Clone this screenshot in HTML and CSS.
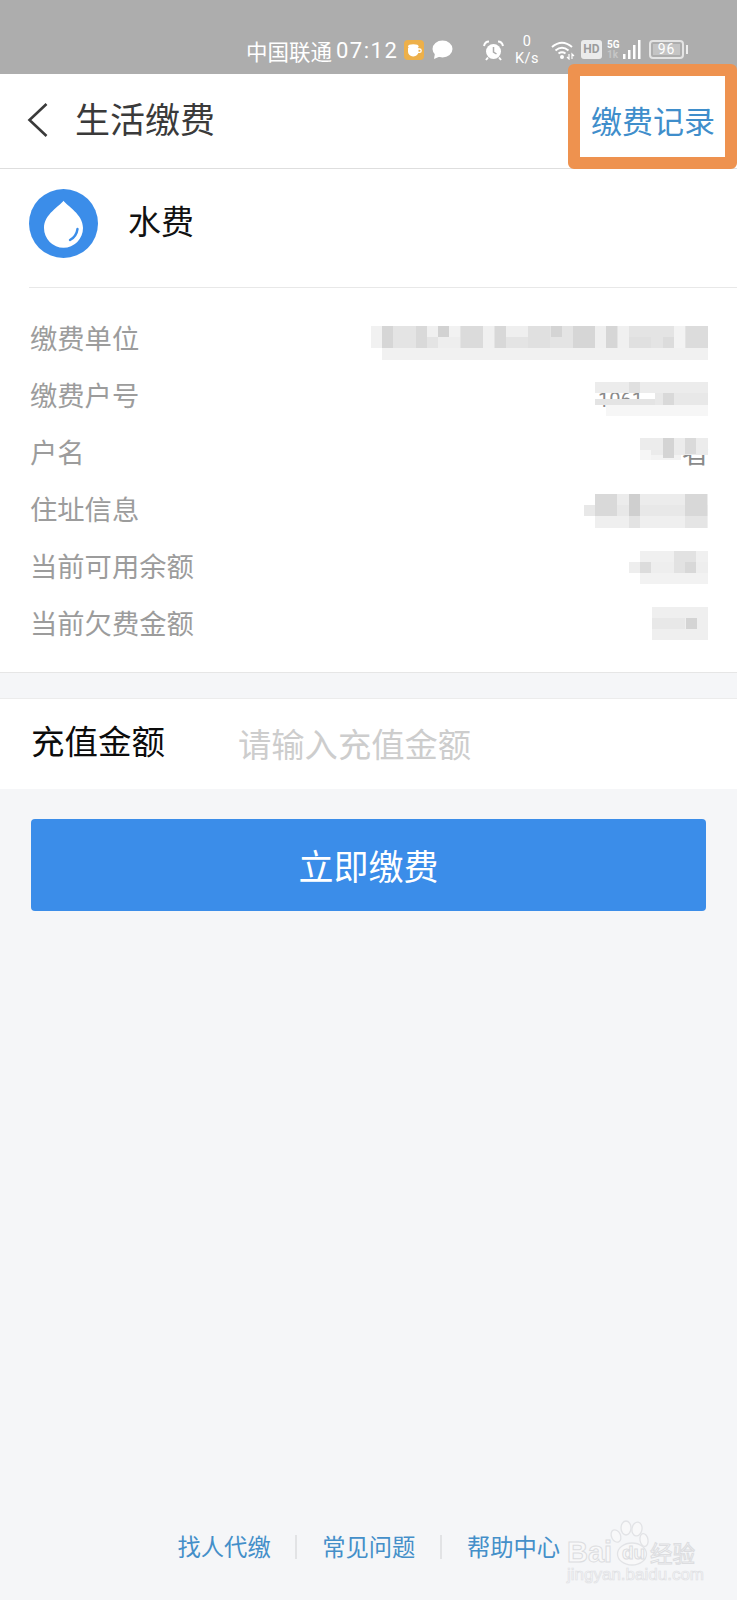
FILE: index.html
```html
<!DOCTYPE html>
<html lang="zh-CN">
<head>
<meta charset="utf-8">
<title>生活缴费</title>
<link rel="stylesheet" href="styles.css">
</head>
<body>
<div class="page">
  <div class="status">
    <span class="carrier">中国联通</span>
    <span class="clock">07:12</span>
    <svg class="ic-app" width="20" height="20" viewBox="0 0 20 20"><rect width="20" height="20" rx="4" fill="#edb04a"/><path d="M4 8h10.500v3.500a5 5 0 0 1-5 5H9a5 5 0 0 1-5-5z" fill="#fff"/><path d="M14 9h1.500a1.700 1.700 0 0 1 0 3.400H14" fill="none" stroke="#fff" stroke-width="1.300"/><ellipse cx="9.300" cy="6.500" rx="5.300" ry="2.300" fill="#fff"/></svg>
    <svg class="ic-msg" width="21" height="20" viewBox="0 0 21 20"><ellipse cx="10.500" cy="9" rx="10" ry="8.500" fill="#fff"/><path d="M3 13 L2 19 L9 16z" fill="#fff"/></svg>
    <svg class="ic-alarm" width="21" height="21" viewBox="0 0 21 21"><circle cx="10.500" cy="11.500" r="7.500" fill="#fff"/><path d="M10.500 7v5l3 2" fill="none" stroke="#adadad" stroke-width="1.500"/><path d="M1 6 Q2 1.500 6 1.500M20 6 Q19 1.500 15 1.500M5 17.500 L3 20M16 17.500 L18 20" fill="none" stroke="#fff" stroke-width="2"/></svg>
    <div class="speed"><span>0</span><span>K/s</span></div>
    <svg class="ic-wifi" width="24" height="20" viewBox="0 0 24 20"><path d="M1 7 Q11 -1.500 21 7M4.500 10.500 Q11 5 17.500 10.500M7.500 13.500 Q11 11 14.500 13.500" fill="none" stroke="#fff" stroke-width="2"/><circle cx="11" cy="17" r="2" fill="#fff"/><path d="M18 14v5l-2-2M21 19v-5l2 2" fill="none" stroke="#fff" stroke-width="1.200"/></svg>
    <span class="hd">HD</span>
    <div class="signal-label"><span>5G</span><span class="dim">1k</span></div>
    <svg class="ic-signal" width="18" height="20" viewBox="0 0 18 20"><rect x="0" y="14" width="2.500" height="5" fill="#fff"/><rect x="5" y="10" width="2.500" height="9" fill="#fff"/><rect x="10" y="5" width="2.500" height="14" fill="#fff"/><rect x="15" y="0" width="2.500" height="19" fill="#fff"/></svg>
    <div class="battery"><span class="battery-body">96</span><span class="battery-nub"></span></div>
  </div>

  <header class="nav">
    <svg class="back" width="21" height="34" viewBox="0 0 21 34"><path d="M19.500 1 L2.500 17 L19.500 33" fill="none" stroke="#3a3a3a" stroke-width="2.600"/></svg>
    <h1 class="nav-title">生活缴费</h1>
    <a class="nav-link">缴费记录</a>
    <span class="highlight"></span>
  </header>

  <section class="card">
    <div class="card-head">
      <svg class="drop" width="69" height="69" viewBox="0 0 69 69"><circle cx="34.500" cy="34.500" r="34.500" fill="#3b8de9"/><path d="M34.500 11.700 C31 17 15 25 15 39 A19.500 19.700 0 0 0 54 39 C54 25 38 17 34.500 11.700Z" fill="#fff"/><path d="M41 51 Q47.500 47.500 48.500 40" fill="none" stroke="#3b8de9" stroke-width="2.400" stroke-linecap="round"/></svg>
      <span class="card-title">水费</span>
    </div>
    <ul class="rows">
      <li class="row"><span class="label">缴费单位</span>
        <svg class="mosaic" width="337" height="34" viewBox="0 0 337 34">
          <rect x="0" y="0" width="337" height="22" fill="#e4e4e4"/><rect x="11" y="22" width="326" height="12" fill="#f1f1f1"/><rect x="0" y="0" width="11" height="22" fill="#f1f1f1"/>
          <rect x="11" y="0" width="11" height="22" fill="#d6d6d6"/><rect x="45" y="0" width="11" height="22" fill="#d9d9d9"/><rect x="56" y="0" width="11" height="11" fill="#f0f0f0"/><rect x="67" y="0" width="11" height="11" fill="#d2d2d2"/><rect x="78" y="0" width="11" height="11" fill="#f2f2f2"/><rect x="67" y="11" width="22" height="11" fill="#eeeeee"/><rect x="90" y="0" width="22" height="22" fill="#dbdbdb"/><rect x="112" y="0" width="11" height="22" fill="#f0f0f0"/><rect x="124" y="0" width="11" height="22" fill="#d8d8d8"/><rect x="135" y="0" width="22" height="11" fill="#efefef"/><rect x="157" y="0" width="22" height="22" fill="#e0e0e0"/><rect x="180" y="0" width="11" height="11" fill="#d4d4d4"/><rect x="202" y="0" width="22" height="22" fill="#d6d6d6"/><rect x="224" y="0" width="11" height="22" fill="#efefef"/><rect x="235" y="0" width="11" height="22" fill="#d6d6d6"/><rect x="247" y="0" width="11" height="22" fill="#f0f0f0"/><rect x="258" y="11" width="22" height="11" fill="#e0e0e0"/><rect x="292" y="11" width="11" height="11" fill="#dcdcdc"/><rect x="303" y="0" width="11" height="22" fill="#f3f3f3"/><rect x="315" y="0" width="22" height="22" fill="#dcdcdc"/>
        </svg></li>
      <li class="row"><span class="label">缴费户号</span>
        <svg class="mosaic" width="113" height="34" viewBox="0 0 113 34">
          <g transform="translate(0 -1)"><text class="frag" x="3" y="25">1061</text><rect x="0" y="0" width="113" height="11" fill="#ececec"/><rect x="34" y="0" width="11" height="11" fill="#e0e0e0"/><rect x="0" y="17" width="113" height="6" fill="#e4e4e4"/><rect x="60" y="11" width="53" height="12" fill="#e8e8e8"/><rect x="68" y="11" width="11" height="12" fill="#d9d9d9"/><rect x="11" y="23" width="102" height="11" fill="#f6f6f6"/></g>
        </svg></li>
      <li class="row"><span class="label">户名</span>
        <svg class="mosaic" width="68" height="34" viewBox="0 0 68 34">
          <g transform="translate(0 -2)"><text class="frag-name" x="42" y="25">者</text><rect x="0" y="0" width="68" height="12" fill="#ececec"/><rect x="11" y="12" width="57" height="5" fill="#ebebeb"/><rect x="11" y="17" width="30" height="5" fill="#f3f3f3"/><rect x="23" y="0" width="11" height="20" fill="#d4d4d4"/><rect x="45" y="0" width="11" height="16" fill="#dadada"/><rect x="0" y="12" width="11" height="10" fill="#f6f6f6"/></g>
        </svg></li>
      <li class="row"><span class="label">住址信息</span>
        <svg class="mosaic" width="124" height="34" viewBox="0 0 124 34">
          <g transform="translate(0 -3)"><rect x="0" y="11" width="124" height="11" fill="#e8e8e8"/><rect x="11" y="0" width="113" height="11" fill="#ececec"/><rect x="11" y="22" width="113" height="12" fill="#efefef"/><rect x="11" y="0" width="22" height="22" fill="#d9d9d9"/><rect x="45" y="0" width="11" height="22" fill="#cfcfcf"/><rect x="45" y="22" width="11" height="12" fill="#e3e3e3"/><rect x="101" y="0" width="22" height="22" fill="#d8d8d8"/><rect x="101" y="22" width="22" height="12" fill="#e5e5e5"/></g>
        </svg></li>
      <li class="row"><span class="label">当前可用余额</span>
        <svg class="mosaic" width="79" height="34" viewBox="0 0 79 34">
          <g transform="translate(0 -3)"><rect x="0" y="11" width="79" height="11" fill="#eeeeee"/><rect x="11" y="0" width="68" height="11" fill="#f0f0f0"/><rect x="11" y="22" width="68" height="11" fill="#f2f2f2"/><rect x="11" y="11" width="11" height="11" fill="#dcdcdc"/><rect x="45" y="0" width="22" height="22" fill="#e2e2e2"/><rect x="56" y="11" width="11" height="11" fill="#d8d8d8"/></g>
        </svg></li>
      <li class="row"><span class="label">当前欠费金额</span>
        <svg class="mosaic" width="56" height="34" viewBox="0 0 56 34">
          <g transform="translate(0 -4)"><rect x="0" y="0" width="56" height="33" fill="#efefef"/><rect x="0" y="11" width="33" height="11" fill="#e8e8e8"/><rect x="34" y="11" width="11" height="11" fill="#d4d4d4"/></g>
        </svg></li>
    </ul>
  </section>

  <section class="amount">
    <span class="amount-label">充值金额</span>
    <span class="amount-hint">请输入充值金额</span>
  </section>

  <button class="pay">立即缴费</button>

  <footer class="foot">
    <a class="foot-link">找人代缴</a>
    <i class="foot-sep"></i>
    <a class="foot-link">常见问题</a>
    <i class="foot-sep"></i>
    <a class="foot-link">帮助中心</a>
  </footer>

  <div class="mark">
    <svg class="paw" width="40" height="50" viewBox="0 0 40 50"><g fill="#f8f8f9" stroke="#e2e3e6" stroke-width="1.300"><ellipse cx="6" cy="16" rx="4.500" ry="6.500" transform="rotate(-25 6 16)"/><ellipse cx="16" cy="8" rx="5" ry="7"/><ellipse cx="27" cy="9" rx="5" ry="7" transform="rotate(10 27 9)"/><ellipse cx="34" cy="20" rx="4" ry="6.500" transform="rotate(-10 34 20)"/><ellipse cx="22" cy="34" rx="14.500" ry="11"/></g></svg>
    <span class="mark-bai">Bai</span>
    <span class="mark-du">du</span>
    <span class="mark-cn">经验</span>
    <div class="mark-url">jingyan.baidu.com</div>
  </div>
</div>
</body>
</html>
```

FILE: styles.css
```css
* { box-sizing: border-box; }
html, body { margin: 0; padding: 0; }
body {
  font-family: "Noto Sans CJK SC", "Noto Sans", sans-serif;
  background: #f5f6f8;
}
.page {
  position: relative;
  width: 737px;
  height: 1600px;
  display: flex;
  flex-direction: column;
  overflow: hidden;
  background: #f5f6f8;
}

/* status bar */
.status {
  height: 74px;
  flex: none;
  background: #adadad;
  display: flex;
  align-items: flex-start;
  padding: 40px 0 0 246px;
  color: #fff;
}
.carrier { font-size: 21.500px; line-height: 22px; width: 88px; }
.clock { font-family: Roboto, sans-serif; font-size: 22px; line-height: 22px; letter-spacing: 1.500px; margin-left: 2px; width: 68px; }
.ic-msg { margin-left: 8px; }
.ic-alarm { margin-left: 30px; }
.speed {
  width: 26px;
  margin-left: 10px;
  margin-top: -7px;
  display: flex;
  flex-direction: column;
  align-items: center;
  font-family: Roboto, sans-serif;
  font-size: 14.500px;
  line-height: 17px;
  letter-spacing: .5px;
}
.ic-wifi { margin-left: 11px; }
.hd {
  width: 21px;
  height: 19px;
  margin-left: 6px;
  background: #ebebeb;
  color: #9c9c9c;
  border-radius: 3px;
  font-family: Roboto, sans-serif;
  font-weight: 700;
  font-size: 12px;
  line-height: 19px;
  text-align: center;
}
.signal-label {
  width: 12px;
  margin-left: 5px;
  display: flex;
  flex-direction: column;
  font-family: Roboto, sans-serif;
  font-weight: 700;
  font-size: 10px;
  line-height: 10px;
}
.signal-label .dim { color: #c6c6c6; }
.ic-signal { margin-left: 4px; }
.battery { display: flex; align-items: center; margin-left: 8px; }
.battery-body {
  width: 35px;
  height: 19px;
  border: 2px solid #e4e4e4;
  border-radius: 4px;
  background: linear-gradient(#c4c4c4, #c4c4c4) no-repeat 2px 2px / 27px 11px;
  font-family: Roboto, sans-serif;
  font-size: 14px;
  line-height: 15px;
  letter-spacing: 1px;
  text-align: center;
}
.battery-nub { width: 2px; height: 9px; margin-left: 2px; background: #eeeeee; }

/* nav */
.nav {
  position: relative;
  height: 95px;
  flex: none;
  background: #fff;
  border-bottom: 1px solid #dedede;
  display: flex;
  align-items: center;
  padding: 0 22px 0 27px;
}
.back { margin-top: -2px; }
.nav-title {
  margin: -7px 0 0 27px;
  font-size: 35px;
  line-height: 46px;
  font-weight: 400;
  color: #3a3a3a;
}
.nav-link {
  margin: -3px 0 0 auto;
  font-size: 31px;
  line-height: 42px;
  color: #3f8ecb;
}
.highlight {
  position: absolute;
  left: 568px;
  top: -10px;
  width: 169px;
  height: 105px;
  border: 12px solid #ee924f;
  border-radius: 6px;
}

/* card */
.card { background: #fff; border-bottom: 1px solid #e6e6e6; }
.card-head {
  height: 119px;
  margin-left: 29px;
  display: flex;
  align-items: center;
  border-bottom: 1px solid #e8e8e8;
}
.drop { margin-top: -9px; }
.card-title {
  margin: -16px 0 0 30px;
  font-size: 33px;
  line-height: 44px;
  color: #111;
}
.rows { list-style: none; margin: 0; padding: 21px 29px 21px 30px; }
.row {
  height: 57px;
  display: flex;
  align-items: center;
  justify-content: space-between;
}
.label { font-size: 27.300px; line-height: 38px; color: #9c9c9c; margin-top: -2px; }
.mosaic { overflow: visible; margin-top: 10px; }
.frag { font-family: Roboto, sans-serif; font-size: 20px; fill: #8a8a8a; }
.frag-name { font-size: 27px; fill: #8a8a8a; }

/* amount */
.amount {
  margin-top: 25px;
  height: 91px;
  flex: none;
  background: #fff;
  border-top: 1px solid #ececec;
  display: flex;
  align-items: center;
  padding-left: 31px;
}
.amount-label { font-size: 33.500px; line-height: 44px; color: #0c0c0c; margin-top: -9px; }
.amount-hint { font-size: 33.300px; line-height: 44px; color: #cdcdcd; margin: -3px 0 0 73px; }

/* button */
.pay {
  flex: none;
  width: 675px;
  height: 92px;
  margin: 30px 0 0 31px;
  padding: 0 0 1px;
  border: 0;
  border-radius: 4px;
  background: #3b8de9;
  color: #fff;
  font-family: inherit;
  font-size: 35px;
  line-height: 46px;
}

/* footer */
.foot {
  margin-top: auto;
  height: 70px;
  flex: none;
  display: flex;
  align-items: flex-start;
  padding-left: 177.500px;
}
.foot-link { font-size: 23.300px; line-height: 32px; color: #448fc9; }
.foot-sep { width: 2px; height: 24px; margin: 5px 25px 0 24.500px; background: #e2e3e5; }

/* watermark */
.mark {
  position: absolute;
  left: 565px;
  top: 1520px;
  width: 134px;
  height: 62px;
}
.paw { position: absolute; left: 45px; top: 0; }
.mark-bai, .mark-du, .mark-cn {
  position: absolute;
  white-space: nowrap;
  color: #f8f8f9;
  -webkit-text-stroke: 1px #dcdde0;
}
.mark-bai {
  left: 2px;
  top: 16px;
  font-family: "Liberation Sans", sans-serif;
  font-weight: 700;
  font-size: 29px;
  line-height: 32px;
}
.mark-du {
  left: 57px;
  top: 21px;
  font-family: "Liberation Sans", sans-serif;
  font-weight: 700;
  font-size: 19px;
  line-height: 24px;
}
.mark-cn {
  left: 85px;
  top: 17px;
  font-size: 22.500px;
  line-height: 30px;
}
.mark-url {
  position: absolute;
  left: 2px;
  top: 45px;
  font-family: "Liberation Sans", sans-serif;
  font-size: 17px;
  line-height: 20px;
  white-space: nowrap;
  color: #f8f8f9;
  -webkit-text-stroke: .7px #e0e1e4;
}
```
